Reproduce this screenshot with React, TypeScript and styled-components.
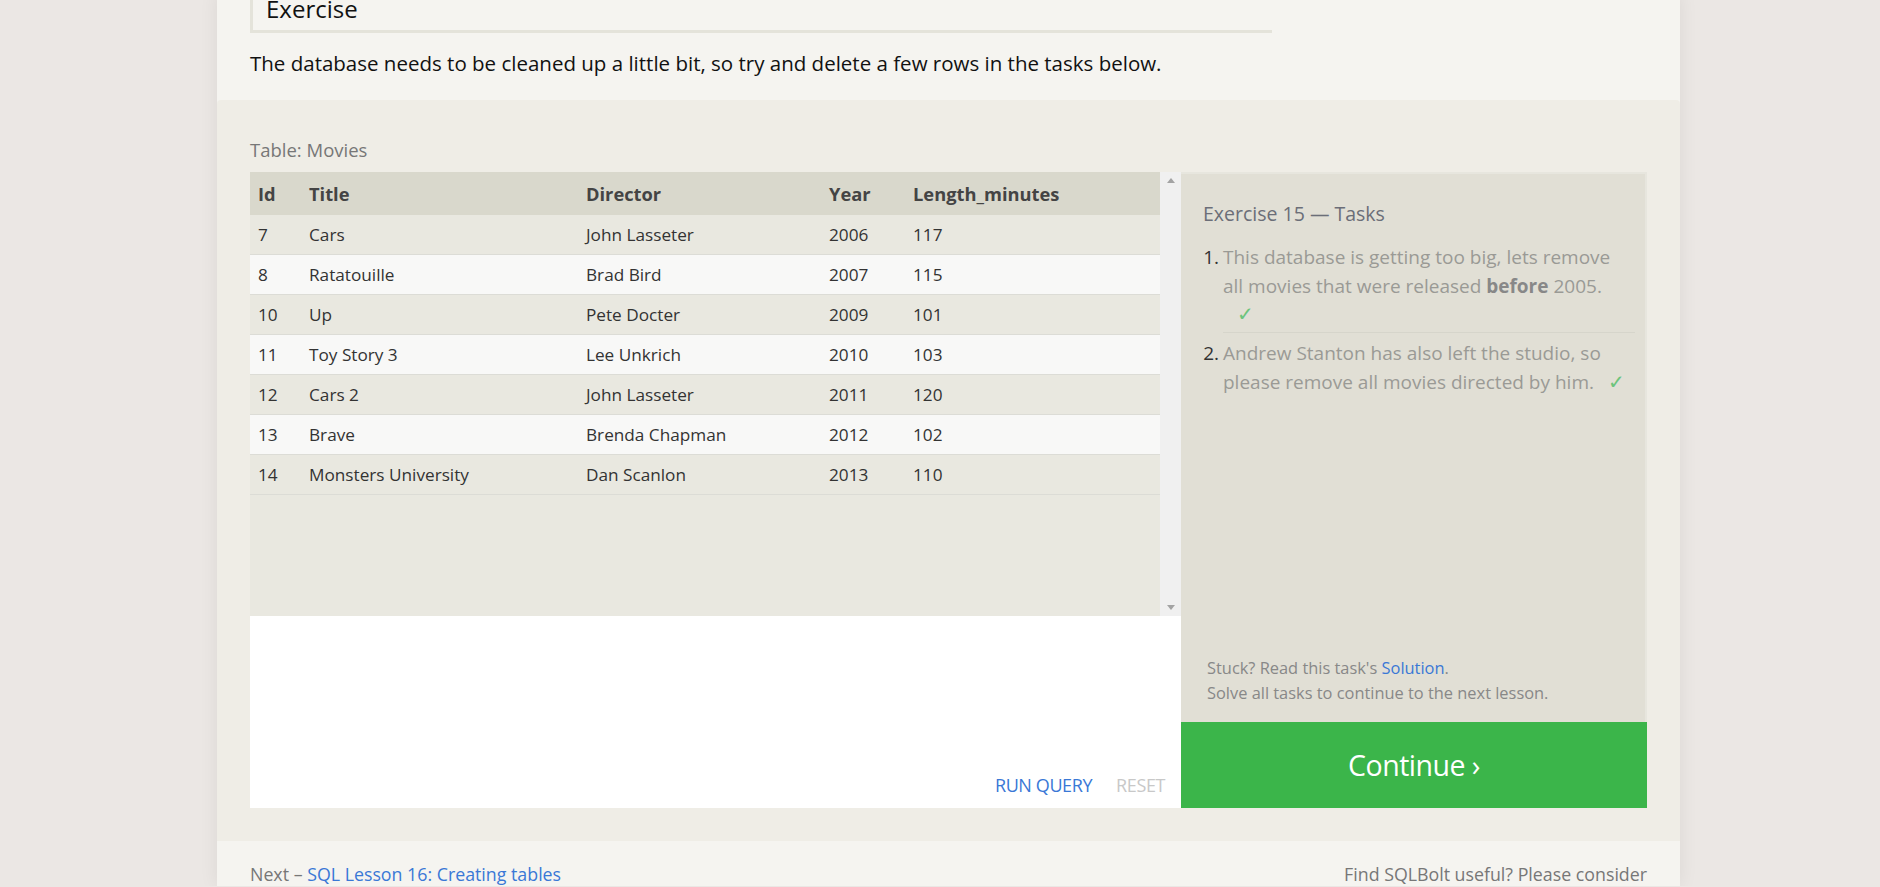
import React from "react";
import styled, { createGlobalStyle } from "styled-components";

const Global = createGlobalStyle`
  html, body { margin: 0; padding: 0; overflow: hidden; }
  body {
    background: #ebe7e4;
    font-family: "Open Sans", "Noto Sans", sans-serif;
    color: #222;
  }
`;

const Page = styled.div`
  margin-left: 217px;
  width: 1463px;
  background: #f5f4f0;
  box-shadow: 0 0 18px rgba(0, 0, 0, 0.07);
  min-height: 887px;
`;

const Intro = styled.div`
  padding: 0 33px;
`;

const HeadingBox = styled.div`
  margin-top: -7px;
  width: 1006px;
  border-left: 3px solid #e4e3da;
  border-bottom: 3px solid #e4e3da;
  padding: 0 0 5px 13px;
`;

const Heading = styled.h3`
  margin: 0;
  font-weight: 400;
  font-size: 24px;
  line-height: 32px;
  color: #111;
`;

const Lead = styled.p`
  margin: 16px 0 0;
  padding-bottom: 22px;
  font-size: 20.5px;
  line-height: 29px;
  color: #111;
`;

const Section = styled.section`
  background: #efede6;
  border-top-left-radius: 4px;
  border-top-right-radius: 4px;
  padding: 38px 33px 33px;
`;

const Label = styled.div`
  font-size: 18.5px;
  line-height: 24px;
  color: #777;
  margin-bottom: 10px;
`;

const Workspace = styled.div`
  display: grid;
  grid-template-columns: 931px 466px;
`;

const LeftCol = styled.div`
  display: flex;
  flex-direction: column;
`;

const TableWrap = styled.div`
  display: flex;
  height: 444px;
  background: #e9e8e0;
`;

const TableArea = styled.div`
  flex: 1;
  overflow: hidden;
`;

const Table = styled.table`
  width: 100%;
  border-collapse: collapse;
  font-size: 17.2px;
  color: #333;
`;

const Th = styled.th<{ $w?: number }>`
  text-align: left;
  font-weight: 700;
  font-size: 18.3px;
  color: #444;
  background: #d9d8cc;
  height: 43px;
  padding: 0;
  width: ${(p) => (p.$w ? `${p.$w}px` : "auto")};
  &:first-child { padding-left: 8px; }
`;

const Tr = styled.tr<{ $alt: boolean }>`
  background: ${(p) => (p.$alt ? "#f8f8f7" : "#e9e8e0")};
  border-bottom: 1px solid #dcdcd6;
`;

const Td = styled.td`
  height: 39px;
  padding: 0;
  &:first-child { padding-left: 8px; }
`;

const Scrollbar = styled.div`
  width: 21px;
  background: #f0f0f0;
  display: flex;
  flex-direction: column;
  justify-content: space-between;
  align-items: center;
  padding: 6px 0;
  box-sizing: border-box;
`;

const Arrow = styled.div<{ $down?: boolean }>`
  width: 0;
  height: 0;
  border-left: 4px solid transparent;
  border-right: 4px solid transparent;
  ${(p) =>
    p.$down
      ? "border-top: 5px solid #a3a3a3;"
      : "border-bottom: 5px solid #a3a3a3;"}
`;

const Editor = styled.div`
  height: 192px;
  background: #fff;
  display: flex;
  align-items: flex-end;
  justify-content: flex-end;
  gap: 24px;
  padding: 0 16px 11px 0;
  box-sizing: border-box;
`;

const EditorButton = styled.span<{ $muted?: boolean }>`
  font-size: 18px;
  letter-spacing: -0.4px;
  color: ${(p) => (p.$muted ? "#c8c8c8" : "#3a78d6")};
`;

const RightCol = styled.div`
  display: flex;
  flex-direction: column;
`;

const Tasks = styled.div`
  height: 550px;
  background: #e1dfd5;
  border-top: 2px solid #e7e6de;
  border-right: 2px solid #e7e6de;
  box-sizing: border-box;
  padding: 26px 10px 17px 22px;
  display: flex;
  flex-direction: column;
`;

const TasksTitle = styled.div`
  font-size: 19.5px;
  line-height: 28px;
  color: #6b6e78;
  margin-bottom: 15px;
`;

const TaskList = styled.ol`
  list-style: none;
  margin: 0;
  padding: 0;
  flex: 1;
`;

const Task = styled.li<{ $sep?: boolean }>`
  display: flex;
  font-size: 19px;
  line-height: 28.7px;
  color: #9a9a95;
  ${(p) => (p.$sep ? "margin-bottom: 6px;" : "")}
`;

const Num = styled.span`
  width: 25px;
  flex-shrink: 0;
  color: #333;
  text-align: right;
  padding-right: 4px;
  box-sizing: border-box;
  margin-left: -5px;
`;

const TaskText = styled.div<{ $sep?: boolean }>`
  flex: 1;
  padding-bottom: 3px;
  border-bottom: 1px solid ${(p) => (p.$sep ? "#d6d5cb" : "transparent")};
  b { color: #888; }
`;

const Check = styled.span`
  color: #6cc47c;
  font-size: 20px;
  margin-left: 14px;
`;

const Help = styled.div`
  font-size: 16.4px;
  line-height: 25px;
  color: #888;
  padding-left: 4px;
`;

const Link = styled.a`
  color: #3a78d6;
  text-decoration: none;
`;

const ContinueButton = styled.button`
  height: 86px;
  border: none;
  background: #3bb54a;
  color: #fff;
  font-family: inherit;
  font-size: 28.5px;
  letter-spacing: -0.5px;
  cursor: pointer;
`;

const Footer = styled.div`
  display: flex;
  justify-content: space-between;
  padding: 21px 33px 0;
  font-size: 17.8px;
  line-height: 24px;
  color: #777;
`;

const rows = [
  [7, "Cars", "John Lasseter", 2006, 117],
  [8, "Ratatouille", "Brad Bird", 2007, 115],
  [10, "Up", "Pete Docter", 2009, 101],
  [11, "Toy Story 3", "Lee Unkrich", 2010, 103],
  [12, "Cars 2", "John Lasseter", 2011, 120],
  [13, "Brave", "Brenda Chapman", 2012, 102],
  [14, "Monsters University", "Dan Scanlon", 2013, 110],
];

export default function App() {
  return (
    <>
      <Global />
      <Page>
        <Intro>
          <HeadingBox>
            <Heading>Exercise</Heading>
          </HeadingBox>
          <Lead>
            The database needs to be cleaned up a little bit, so try and delete a few rows in the tasks below.
          </Lead>
        </Intro>
        <Section>
          <Label>Table: Movies</Label>
          <Workspace>
            <LeftCol>
              <TableWrap>
                <TableArea>
                  <Table>
                    <thead>
                      <tr>
                        <Th $w={51}>Id</Th>
                        <Th $w={277}>Title</Th>
                        <Th $w={243}>Director</Th>
                        <Th $w={84}>Year</Th>
                        <Th>Length_minutes</Th>
                      </tr>
                    </thead>
                    <tbody>
                      {rows.map((r, i) => (
                        <Tr key={r[0]} $alt={i % 2 === 1}>
                          {r.map((c, j) => (
                            <Td key={j}>{c}</Td>
                          ))}
                        </Tr>
                      ))}
                    </tbody>
                  </Table>
                </TableArea>
                <Scrollbar>
                  <Arrow />
                  <Arrow $down />
                </Scrollbar>
              </TableWrap>
              <Editor>
                <EditorButton>RUN QUERY</EditorButton>
                <EditorButton $muted>RESET</EditorButton>
              </Editor>
            </LeftCol>
            <RightCol>
              <Tasks>
                <TasksTitle>Exercise 15 — Tasks</TasksTitle>
                <TaskList>
                  <Task $sep>
                    <Num>1.</Num>
                    <TaskText $sep>
                      This database is getting too big, lets remove all movies that were released <b>before</b> 2005.
                      <br />
                      <Check>✓</Check>
                    </TaskText>
                  </Task>
                  <Task>
                    <Num>2.</Num>
                    <TaskText>
                      Andrew Stanton has also left the studio, so please remove all movies directed by him.
                      <Check>✓</Check>
                    </TaskText>
                  </Task>
                </TaskList>
                <Help>
                  Stuck? Read this task's <Link href="#">Solution</Link>.
                  <br />
                  Solve all tasks to continue to the next lesson.
                </Help>
              </Tasks>
              <ContinueButton>Continue ›</ContinueButton>
            </RightCol>
          </Workspace>
        </Section>
        <Footer>
          <span>
            Next – <Link href="#">SQL Lesson 16: Creating tables</Link>
          </span>
          <span>Find SQLBolt useful? Please consider</span>
        </Footer>
      </Page>
    </>
  );
}
